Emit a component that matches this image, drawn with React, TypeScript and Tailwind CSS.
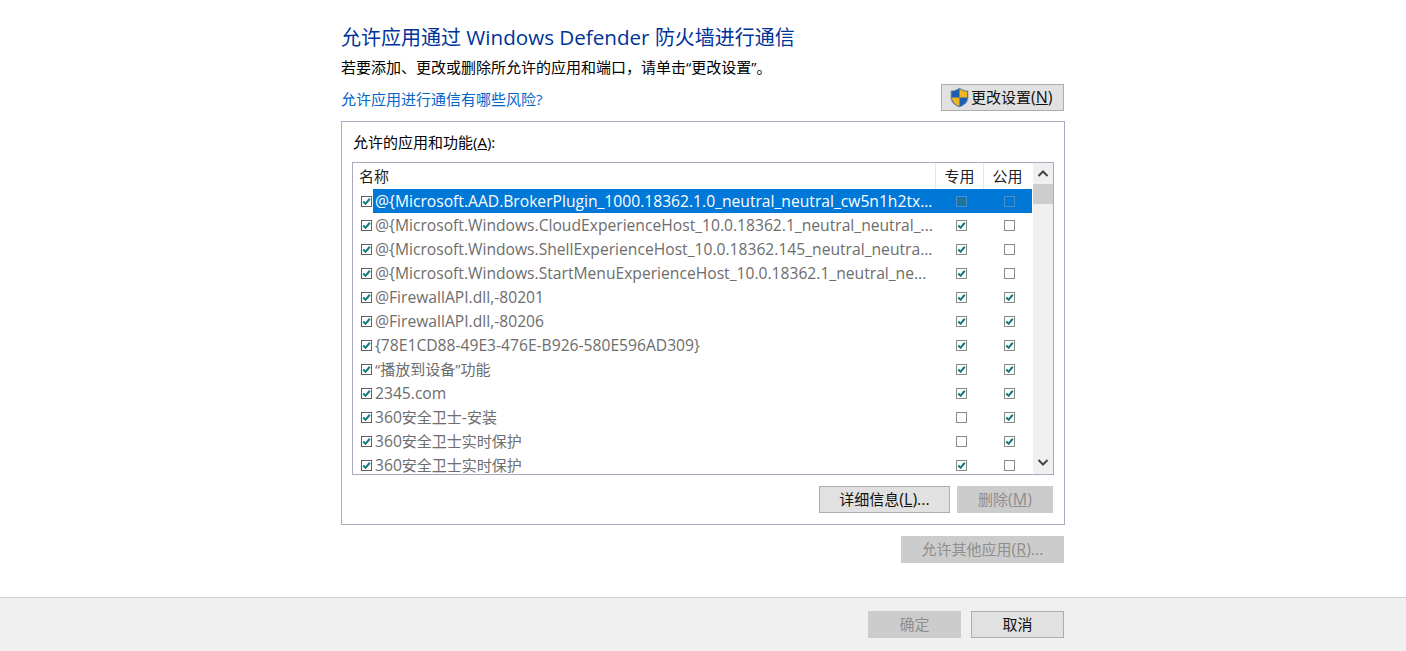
import type { ReactNode } from "react";

type Row = { name: string; priv: boolean; pub: boolean };

const rows: Row[] = [
  { name: "@{Microsoft.AAD.BrokerPlugin_1000.18362.1.0_neutral_neutral_cw5n1h2tx...", priv: true, pub: false },
  { name: "@{Microsoft.Windows.CloudExperienceHost_10.0.18362.1_neutral_neutral_...", priv: true, pub: false },
  { name: "@{Microsoft.Windows.ShellExperienceHost_10.0.18362.145_neutral_neutra...", priv: true, pub: false },
  { name: "@{Microsoft.Windows.StartMenuExperienceHost_10.0.18362.1_neutral_ne...", priv: true, pub: false },
  { name: "@FirewallAPI.dll,-80201", priv: true, pub: true },
  { name: "@FirewallAPI.dll,-80206", priv: true, pub: true },
  { name: "{78E1CD88-49E3-476E-B926-580E596AD309}", priv: true, pub: true },
  { name: "“播放到设备”功能", priv: true, pub: true },
  { name: "2345.com", priv: true, pub: true },
  { name: "360安全卫士-安装", priv: false, pub: true },
  { name: "360安全卫士实时保护", priv: false, pub: true },
  { name: "360安全卫士实时保护", priv: true, pub: false },
];

// latin runs sit a bit wider than the CJK ones in the reference
function Mixed({ text }: { text: string }) {
  return (
    <>
      {text.split(/([\u4e00-\u9fff“”]+)/).map((part, i) =>
        i % 2 === 1 ? <span key={i}>{part}</span> : <span key={i} className="text-[15.65px]">{part}</span>,
      )}
    </>
  );
}

function Check({ checked, dim, dark }: { checked: boolean; dim?: boolean; dark?: boolean }) {
  if (dim) {
    return (
      <span className="flex h-[11px] w-[11px] items-center justify-center border border-[#4f8fc4]">
        {checked && <span className="block h-[7px] w-[7px] bg-[#1f7595]" />}
      </span>
    );
  }
  return (
    <span className={`flex h-[11px] w-[11px] items-center justify-center border ${dark ? "border-[#5f5f5f] bg-white" : "border-[#8a8a8a] bg-white"}`}>
      {checked && (
        <svg width="9" height="9" viewBox="0 0 9 9" fill="none">
          <path d="M1.2 4.4 L3.6 6.8 L7.8 1.8" stroke="#217a80" strokeWidth="2.1" />
        </svg>
      )}
    </span>
  );
}

function Btn({ children, disabled, className }: { children: ReactNode; disabled?: boolean; className: string }) {
  return (
    <div
      className={`flex h-[27px] items-center justify-center border text-[15px] ${
        disabled ? "border-[#cccccc] bg-[#cccccc] text-[#8e8e8e]" : "border-[#adadad] bg-[#e1e1e1] text-[#111111]"
      } ${className}`}
    >
      {children}
    </div>
  );
}

function Hotkey({ label, k, tail }: { label: string; k: string; tail?: string }) {
  return (
    <span className="-mt-px">
      {label}
      <span className="text-[16px]">
        (<span className="underline">{k}</span>){tail}
      </span>
    </span>
  );
}

function Shield() {
  return (
    <svg width="19" height="21" viewBox="0 0 20 22">
      <path d="M10 1 C7 3 4 4 1 4 V11 C1 16 5 19.5 10 21 C15 19.5 19 16 19 11 V4 C16 4 13 3 10 1 Z" fill="#1f5fb0" stroke="#9aa7b8" strokeWidth="0.8" />
      <path d="M10 2 C13 3.8 15.5 4.7 18 4.8 V11 H10 Z" fill="#f2b51d" />
      <path d="M10 11 H2 C2.3 15.5 5.5 18.6 10 20 Z" fill="#f2b51d" />
    </svg>
  );
}

export default function App() {
  return (
    <div className="flex h-[651px] flex-col overflow-hidden bg-white font-['Open_Sans','Noto_Sans_CJK_SC',sans-serif] text-[#1a1a1a]">
      <main className="mx-auto w-[724px] flex-1 pt-[21px]">
        <h1 className="h-[32px] text-[20px] leading-[32px] font-normal text-[#003399]">
          允许应用通过<span className="text-[20.6px]"> Windows Defender </span>防火墙进行通信
        </h1>
        <p className="mt-[2px] text-[15px] leading-[24px] text-black">若要添加、更改或删除所允许的应用和端口，请单击“更改设置”。</p>

        <div className="mt-[5px] flex h-[27px] items-center justify-between pr-px">
          <a className="pt-[4px] text-[15px] text-[#0066cc]">允许应用进行通信有哪些风险?</a>
          <Btn className="w-[123px] justify-start gap-[2px] pl-[8px]">
            <Shield />
            <Hotkey label="更改设置" k="N" />
          </Btn>
        </div>

        <section className="mt-[10px] h-[404px] border border-[#a9a9c0] px-[10px] pt-[9px]">
          <div className="pl-px text-[15px] leading-[22px] text-black">
            允许的应用和功能(<span className="underline">A</span>):
          </div>

          <div className="mt-[9px] flex h-[313px] w-[702px] overflow-hidden border border-[#a9a9c0]">
            <div className="w-[680px] overflow-hidden">
              <div className="flex h-[26px] pr-[2px] text-[15px] text-[#222222]">
                <div className="flex-1 pt-[2px] pl-[6px]">名称</div>
                <div className="w-[48px] border-l border-[#e4e4e4] pt-[2px] text-center">专用</div>
                <div className="w-[48px] border-l border-[#e4e4e4] pt-[2px] text-center">公用</div>
              </div>
              {rows.map((r, i) => (
                <div key={i} className="flex h-[24px] items-center pr-px text-[15px] text-[#6d6d6d]">
                  <div className="flex w-[20px] justify-end pr-px">
                    <Check checked dark />
                  </div>
                  <div className={`flex h-[24px] flex-1 items-center ${i === 0 ? "bg-[#0078d7] text-white" : ""}`}>
                    <div className="w-[564px] overflow-hidden pt-px pl-[2px] whitespace-nowrap">
                      <Mixed text={r.name} />
                    </div>
                    <div className="flex w-[48px] justify-center pl-[1px]">
                      <Check checked={r.priv} dim={i === 0} />
                    </div>
                    <div className="flex w-[47px] justify-center pl-[2px]">
                      <Check checked={r.pub} dim={i === 0} />
                    </div>
                  </div>
                </div>
              ))}
            </div>
            <div className="relative w-[20px] bg-[#f0f0f0]">
              <svg className="absolute top-[6px] left-[4px]" width="12" height="9" viewBox="0 0 12 9" fill="none">
                <path d="M1.5 7 L6 2.5 L10.5 7" stroke="#444444" strokeWidth="2" />
              </svg>
              <div className="absolute top-[21px] h-[20px] w-[20px] bg-[#cdcdcd]" />
              <svg className="absolute bottom-[7px] left-[4px]" width="12" height="9" viewBox="0 0 12 9" fill="none">
                <path d="M1.5 2 L6 6.5 L10.5 2" stroke="#444444" strokeWidth="2" />
              </svg>
            </div>
          </div>

          <div className="mt-[11px] flex justify-end gap-[7px] pr-px">
            <Btn className="w-[131px]">
              <Hotkey label="详细信息" k="L" tail="..." />
            </Btn>
            <Btn disabled className="w-[96px]">
              <Hotkey label="删除" k="M" />
            </Btn>
          </div>
        </section>

        <div className="mt-[11px] flex justify-end pr-px">
          <Btn disabled className="w-[163px]">
            <Hotkey label="允许其他应用" k="R" tail="..." />
          </Btn>
        </div>
      </main>

      <footer className="flex h-[54px] justify-end gap-[10px] border-t border-[#cfcfcf] bg-[#f0f0f0] pt-[13px] pr-[342px]">
        <Btn disabled className="w-[93px]">确定</Btn>
        <Btn className="w-[93px]">取消</Btn>
      </footer>
    </div>
  );
}
